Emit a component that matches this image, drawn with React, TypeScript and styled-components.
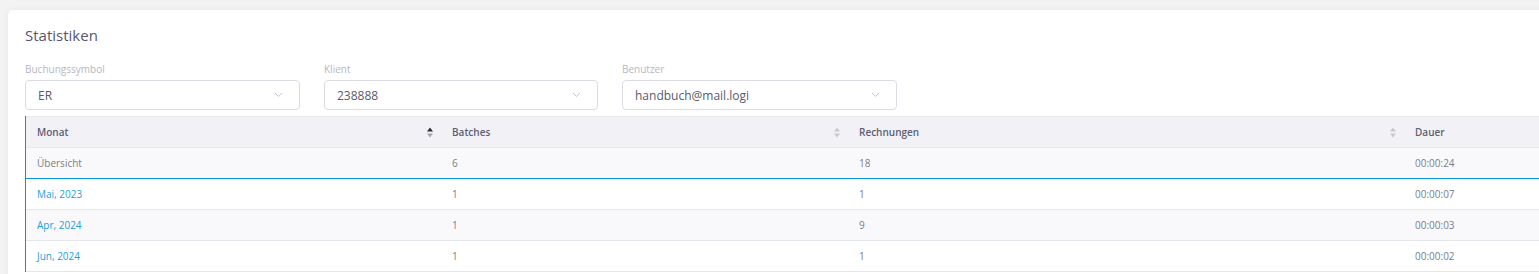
import React from 'react'
import { styled, createGlobalStyle } from 'styled-components'

const Global = createGlobalStyle`
  html, body {
    margin: 0;
    padding: 0;
    background: #f3f3f3;
    overflow: hidden;
    font-family: "Open Sans", "Noto Sans", sans-serif;
    -webkit-font-smoothing: antialiased;
  }
`

const Page = styled.div`
  padding: 10px 0 0 8px;
  width: 1600px;
`

const Card = styled.div`
  background: #fff;
  border-radius: 5px;
  box-shadow: 0 0 6px rgba(0, 0, 0, 0.06);
  padding: 15px 0 0 17px;
  height: 280px;
`

const Title = styled.h2`
  margin: 0 0 18px 0;
  font-size: 15px;
  font-weight: 400;
  color: #585670;
  line-height: 20px;
`

const Filters = styled.div`
  display: flex;
  gap: 24px;
`

const Field = styled.div`
  display: flex;
  flex-direction: column;
  gap: 5px;
`

const Label = styled.label`
  font-size: 10px;
  color: #b7b6c3;
  line-height: 12px;
`

const Select = styled.div<{ $w: number }>`
  width: ${(p) => p.$w}px;
  height: 30px;
  box-sizing: border-box;
  border: 1px solid #dcdbe4;
  border-radius: 4px;
  display: flex;
  align-items: center;
  justify-content: space-between;
  padding: 0 16px 0 12px;
  font-size: 12px;
  color: #5b5a6c;
`

const Table = styled.div`
  margin-top: 6px;
  border-left: 1px solid #6e6e78;
  width: 1560px;
`

const cols = '415px 407px 556px 1fr'

const HeadRow = styled.div`
  display: grid;
  grid-template-columns: ${cols};
  height: 32px;
  background: #f2f2f6;
  border-top: 1px solid #e6e6ee;
  border-bottom: 1px solid #e6e6ee;
  box-sizing: border-box;
`

const HeadCell = styled.div`
  display: flex;
  align-items: center;
  justify-content: space-between;
  padding: 0 8px 0 11px;
  font-size: 10px;
  font-weight: 600;
  color: #5e5d72;
`

const Row = styled.div<{ $alt?: boolean; $accent?: boolean }>`
  display: grid;
  grid-template-columns: ${cols};
  height: 31px;
  box-sizing: border-box;
  background: ${(p) => (p.$alt ? '#f9f9fb' : '#fff')};
  border-bottom: 1px solid ${(p) => (p.$accent ? '#0a97d9' : '#e6e6ee')};
`

const Cell = styled.div<{ $link?: boolean }>`
  display: flex;
  align-items: center;
  padding-left: 11px;
  font-size: 10px;
  color: ${(p) => (p.$link ? '#1a9fd9' : '#7d7c88')};
`

const Chevron = () => (
  <svg width="9" height="6" viewBox="0 0 9 6" fill="none">
    <path d="M1 1l3.5 3.5L8 1" stroke="#c7c6d0" strokeWidth="1" />
  </svg>
)

const Sort = ({ active }: { active?: boolean }) => (
  <svg width="6" height="11" viewBox="0 0 6 11">
    <path d="M3 0.5L6 4.5H0z" fill={active ? '#2b2b33' : '#c9c8d0'} />
    <path d="M3 10.5L0 6.5H6z" fill={active ? '#a9a8b2' : '#c9c8d0'} />
  </svg>
)

const data = [
  { m: 'Mai, 2023', b: '1', r: '1', d: '00:00:07' },
  { m: 'Apr, 2024', b: '1', r: '9', d: '00:00:03' },
  { m: 'Jun, 2024', b: '1', r: '1', d: '00:00:02' },
]

export default function App() {
  return (
    <>
      <Global />
      <Page>
        <Card>
          <Title>Statistiken</Title>
          <Filters>
            <Field>
              <Label>Buchungssymbol</Label>
              <Select $w={275}>ER<Chevron /></Select>
            </Field>
            <Field>
              <Label>Klient</Label>
              <Select $w={274}>238888<Chevron /></Select>
            </Field>
            <Field>
              <Label>Benutzer</Label>
              <Select $w={275}>handbuch@mail.logi<Chevron /></Select>
            </Field>
          </Filters>
          <Table>
            <HeadRow>
              <HeadCell>Monat<Sort active /></HeadCell>
              <HeadCell>Batches<Sort /></HeadCell>
              <HeadCell>Rechnungen<Sort /></HeadCell>
              <HeadCell>Dauer</HeadCell>
            </HeadRow>
            <Row $alt $accent>
              <Cell>Übersicht</Cell>
              <Cell>6</Cell>
              <Cell>18</Cell>
              <Cell>00:00:24</Cell>
            </Row>
            {data.map((r, i) => (
              <Row key={r.m} $alt={i % 2 === 1}>
                <Cell $link>{r.m}</Cell>
                <Cell>{r.b}</Cell>
                <Cell>{r.r}</Cell>
                <Cell>{r.d}</Cell>
              </Row>
            ))}
          </Table>
        </Card>
      </Page>
    </>
  )
}
